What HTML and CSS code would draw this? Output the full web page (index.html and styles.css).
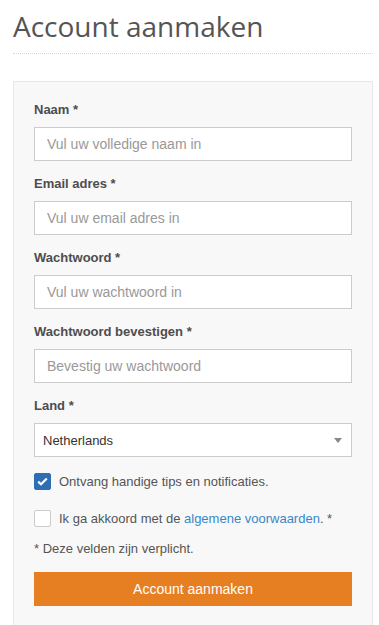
FILE: index.html
```html
<!DOCTYPE html>
<html lang="nl">
<head>
  <meta charset="UTF-8">
  <meta name="viewport" content="width=device-width, initial-scale=1.0">
  <title>Account aanmaken</title>
  <link rel="stylesheet" href="styles.css">
</head>
<body>
  <div class="page">
    <h1 class="page-title">Account aanmaken</h1>

    <form class="panel">
      <div class="field">
        <label class="field-label">Naam *</label>
        <input class="field-input" type="text" placeholder="Vul uw volledige naam in">
      </div>
      <div class="field">
        <label class="field-label">Email adres *</label>
        <input class="field-input" type="email" placeholder="Vul uw email adres in">
      </div>
      <div class="field">
        <label class="field-label">Wachtwoord *</label>
        <input class="field-input" type="password" placeholder="Vul uw wachtwoord in">
      </div>
      <div class="field">
        <label class="field-label">Wachtwoord bevestigen *</label>
        <input class="field-input" type="password" placeholder="Bevestig uw wachtwoord">
      </div>
      <div class="field field-last">
        <label class="field-label">Land *</label>
        <div class="select">
          <span>Netherlands</span>
          <span class="select-arrow"></span>
        </div>
      </div>

      <div class="check-row">
        <span class="check checked">
          <svg width="11" height="9" viewBox="0 0 11 9"><path d="M1.2 4.6 L4 7.3 L9.8 1.5" fill="none" stroke="#fff" stroke-width="2.2"/></svg>
        </span>
        <span>Ontvang handige tips en notificaties.</span>
      </div>
      <div class="check-row">
        <span class="check"></span>
        <span>Ik ga akkoord met de <a href="#" class="link">algemene voorwaarden</a>. *</span>
      </div>

      <p class="note">* Deze velden zijn verplicht.</p>

      <button type="button" class="btn">Account aanmaken</button>
    </form>
  </div>
</body>
</html>
```

FILE: styles.css
```css
* {
  margin: 0;
  padding: 0;
  box-sizing: border-box;
}

body {
  font-family: 'Liberation Sans', Arial, sans-serif;
  font-size: 13px;
  color: #555;
  background: #fff;
  overflow: hidden;
}

.page {
  padding: 9px 6px 0 13px;
}

.page-title {
  font-family: 'Open Sans', sans-serif;
  font-weight: 400;
  font-size: 28px;
  line-height: 34px;
  color: #555;
  padding-bottom: 10px;
  border-bottom: 1px dotted #d8d8d8;
  margin-bottom: 27px;
}

.panel {
  background: #f8f8f8;
  border: 1px solid #e8e8e8;
  padding: 18px 20px 24px;
}

.field {
  margin-bottom: 13px;
}

.field-last {
  margin-bottom: 16px;
}

.field-label {
  display: block;
  font-weight: 700;
  line-height: 20px;
  margin-bottom: 7px;
  color: #4d4d4d;
}

.field-input {
  display: block;
  width: 100%;
  height: 34px;
  border: 1px solid #ccc;
  background: #fff;
  padding: 0 12px;
  font-family: 'Liberation Sans', Arial, sans-serif;
  font-size: 14px;
  color: #555;
  outline: none;
}

.field-input::placeholder {
  color: #999;
}

.select {
  display: flex;
  align-items: center;
  justify-content: space-between;
  height: 34px;
  border: 1px solid #ccc;
  background: #fff;
  padding: 0 8px;
  color: #333;
}

.select-arrow {
  width: 0;
  height: 0;
  border-left: 4px solid transparent;
  border-right: 4px solid transparent;
  border-top: 5px solid #888;
  margin-right: 1px;
}

.check-row {
  display: flex;
  align-items: center;
  gap: 8px;
  height: 17px;
  margin-bottom: 20px;
  line-height: 17px;
}

.check {
  flex: 0 0 17px;
  width: 17px;
  height: 17px;
  border: 1px solid #ccc;
  border-radius: 2px;
  background: #fff;
  display: flex;
  align-items: center;
  justify-content: center;
}

.check.checked {
  background: #2f6db4;
  border-color: #2f6db4;
}

.link {
  color: #3a87c8;
  text-decoration: none;
}

.note {
  line-height: 20px;
  margin-top: -8px;
  margin-bottom: 13px;
}

.btn {
  display: block;
  width: 100%;
  height: 34px;
  border: none;
  background: #e67e22;
  color: #fff;
  font-family: 'Liberation Sans', Arial, sans-serif;
  font-size: 14px;
}
```
